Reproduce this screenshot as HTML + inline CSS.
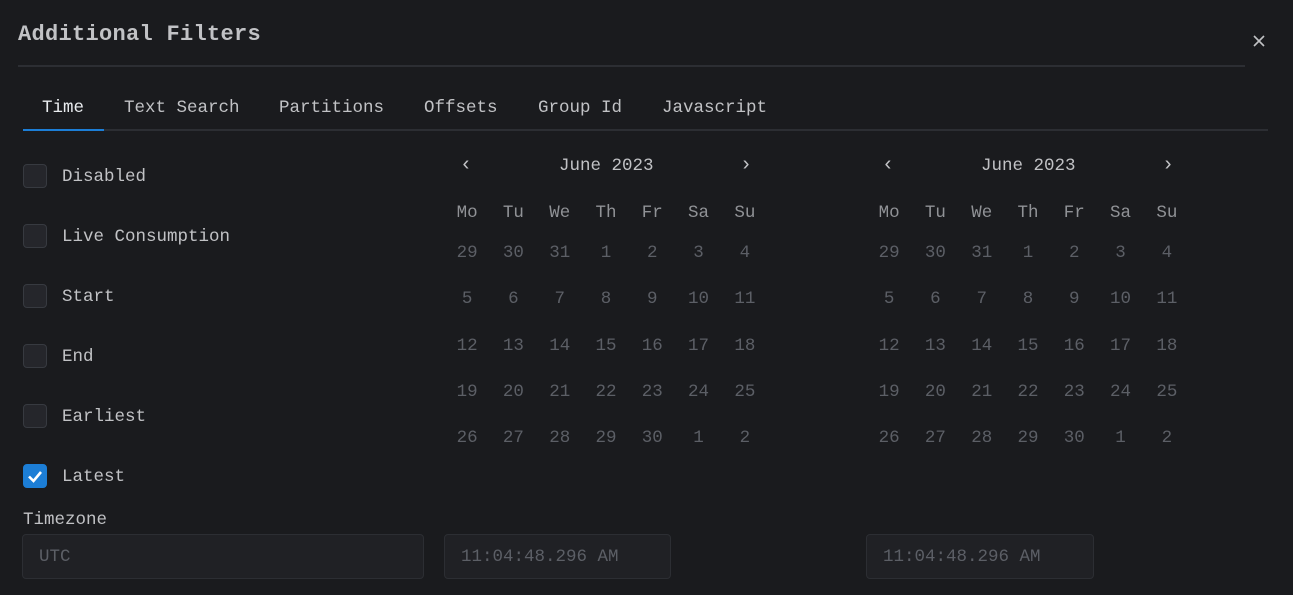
<!DOCTYPE html><html><head><style>
body{margin:0;width:1293px;height:595px;background:#1a1b1e;font-family:"Liberation Mono",monospace;color:#c1c2c5;position:relative;overflow:hidden}
.a{position:absolute}
.t{font-size:17.5px}
.cb{position:absolute;left:23px;width:24px;height:24px;border:1px solid #373a40;background:#25262b;border-radius:4px;box-sizing:border-box}
.lbl{position:absolute;left:62px;font-size:17.5px;color:#c1c2c5;line-height:20px}
.cal{position:absolute;top:150px;width:324px}
.row{display:flex;height:46.3px;align-items:center}
.row span{width:46.3px;text-align:center;font-size:17.5px;color:#5c5f66}
.row.h{height:40px}
.row.h span{color:#909296}
.hd{position:absolute;top:156px;font-size:17.5px;color:#c1c2c5}
.ch{position:absolute;top:154px;font-size:20px;color:#c1c2c5}
.inp{position:absolute;top:534px;height:45px;box-sizing:border-box;border:1px solid #2c2e33;background:#202125;border-radius:4px;color:#5c5f66;font-size:17.5px;line-height:44px;padding-left:16px}
</style></head><body>
<div class="a" style="left:18px;top:22px;font-size:22px;font-weight:bold;letter-spacing:0.3px;color:#c1c2c5">Additional Filters</div>
<svg class="a" style="left:1253px;top:35px" width="12" height="12"><path d="M1 1L11 11M11 1L1 11" stroke="#c1c2c5" stroke-width="1.6"/></svg>
<div class="a" style="left:18px;top:65px;width:1227px;height:2px;background:#2c2e33"></div>
<div class="a" style="left:23px;top:129px;width:1245px;height:2px;background:#2c2e33"></div>
<div class="a" style="left:23px;top:129px;width:81px;height:2px;background:#1c7ed6"></div>
<div class="a t" style="top:98px;left:42px;color:#e9ecef">Time</div>
<div class="a t" style="top:98px;left:124px">Text Search</div>
<div class="a t" style="top:98px;left:279px">Partitions</div>
<div class="a t" style="top:98px;left:424px">Offsets</div>
<div class="a t" style="top:98px;left:538px">Group Id</div>
<div class="a t" style="top:98px;left:662px">Javascript</div>

<div class="cb" style="top:164px"></div><div class="lbl" style="top:167px">Disabled</div>
<div class="cb" style="top:224px"></div><div class="lbl" style="top:227px">Live Consumption</div>
<div class="cb" style="top:284px"></div><div class="lbl" style="top:287px">Start</div>
<div class="cb" style="top:344px"></div><div class="lbl" style="top:347px">End</div>
<div class="cb" style="top:404px"></div><div class="lbl" style="top:407px">Earliest</div>
<div class="cb" style="top:464px;background:#1c7ed6;border-color:#1c7ed6"><svg width="22" height="22" style="position:absolute;left:0;top:0"><path d="M5 11.5L9.5 16L17 7" stroke="#fff" stroke-width="2.6" fill="none"/></svg></div><div class="lbl" style="top:467px">Latest</div>
<div class="a" style="left:23px;top:510px;font-size:17.5px;color:#c1c2c5">Timezone</div>
<div class="inp" style="left:22px;width:402px">UTC</div>
<div class="inp" style="left:444px;width:227px">11:04:48.296 AM</div>
<div class="inp" style="left:866px;width:228px">11:04:48.296 AM</div>

<div class="ch" style="left:460px">‹</div><div class="hd" style="left:559px">June 2023</div><div class="ch" style="left:740px">›</div>
<div class="ch" style="left:882px">‹</div><div class="hd" style="left:981px">June 2023</div><div class="ch" style="left:1162px">›</div>

<div class="cal" style="left:444px;top:193px">
<div class="row h"><span>Mo</span><span>Tu</span><span>We</span><span>Th</span><span>Fr</span><span>Sa</span><span>Su</span></div>
<div class="row" style="margin-top:-3px"><span>29</span><span>30</span><span>31</span><span>1</span><span>2</span><span>3</span><span>4</span></div>
<div class="row"><span>5</span><span>6</span><span>7</span><span>8</span><span>9</span><span>10</span><span>11</span></div>
<div class="row"><span>12</span><span>13</span><span>14</span><span>15</span><span>16</span><span>17</span><span>18</span></div>
<div class="row"><span>19</span><span>20</span><span>21</span><span>22</span><span>23</span><span>24</span><span>25</span></div>
<div class="row"><span>26</span><span>27</span><span>28</span><span>29</span><span>30</span><span>1</span><span>2</span></div>
</div>
<div class="cal" style="left:866px;top:193px">
<div class="row h"><span>Mo</span><span>Tu</span><span>We</span><span>Th</span><span>Fr</span><span>Sa</span><span>Su</span></div>
<div class="row" style="margin-top:-3px"><span>29</span><span>30</span><span>31</span><span>1</span><span>2</span><span>3</span><span>4</span></div>
<div class="row"><span>5</span><span>6</span><span>7</span><span>8</span><span>9</span><span>10</span><span>11</span></div>
<div class="row"><span>12</span><span>13</span><span>14</span><span>15</span><span>16</span><span>17</span><span>18</span></div>
<div class="row"><span>19</span><span>20</span><span>21</span><span>22</span><span>23</span><span>24</span><span>25</span></div>
<div class="row"><span>26</span><span>27</span><span>28</span><span>29</span><span>30</span><span>1</span><span>2</span></div>
</div>
</body></html>
